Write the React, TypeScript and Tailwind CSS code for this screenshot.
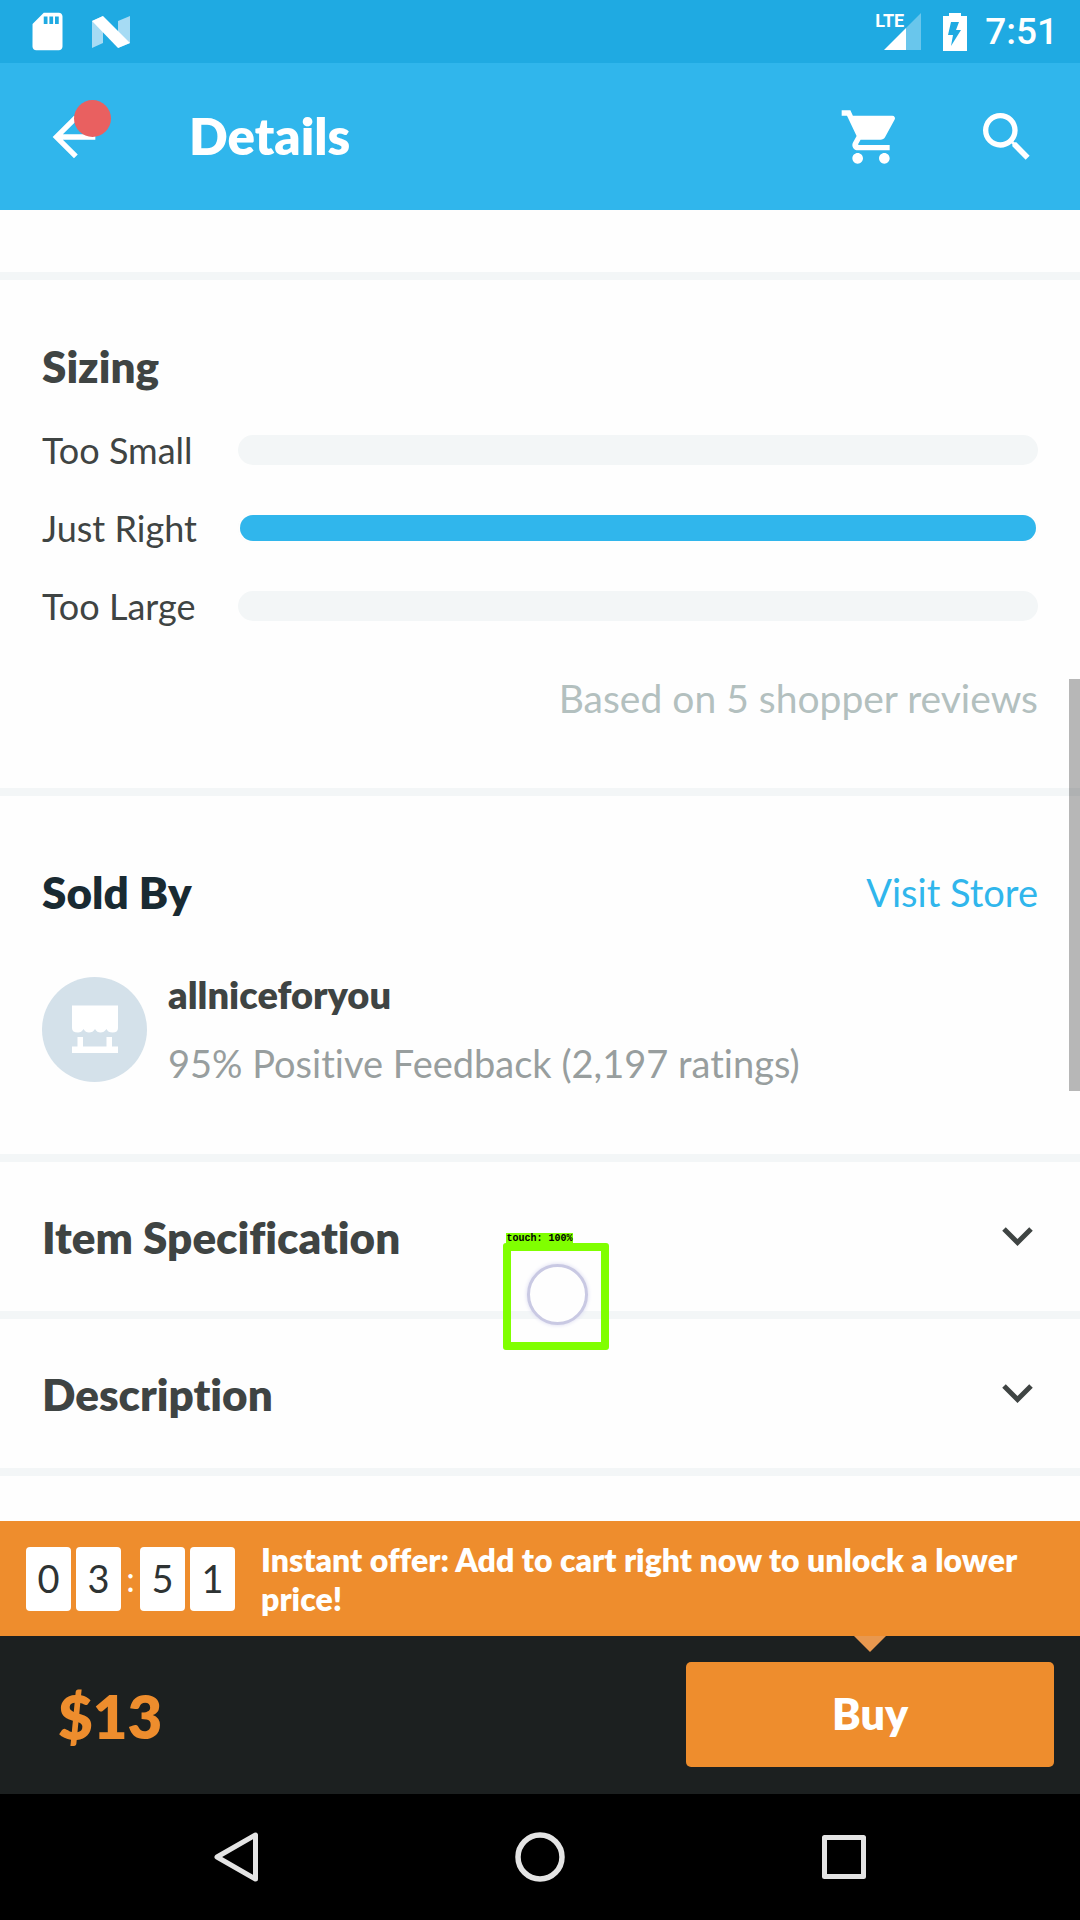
import { MdArrowBack, MdSdCard, MdSearch, MdShoppingCart } from "react-icons/md";

const sizing = [
  { label: "Too Small", percent: 0 },
  { label: "Just Right", percent: 100 },
  { label: "Too Large", percent: 0 },
];

function StatusBar() {
  return (
    <div className="flex h-[63px] items-center justify-between bg-[#1faae2] pr-[22px] pl-[25px] text-white">
      <div className="flex items-center gap-[22px]">
        <MdSdCard size={45} />
        <svg width="38" height="32" viewBox="0 0 38 32" aria-hidden="true">
          <path d="M0 5L11 0V27L0 32Z M26 5L38 0V27L26 32Z" fill="#a6dbf4" />
          <path d="M0 5L11 0L38 27L26 32Z" fill="#fff" />
        </svg>
      </div>
      <div className="flex items-center">
        <div className="relative mr-[22px] h-[37px] w-[46px]">
          <svg className="absolute right-0 bottom-0" width="37" height="37" viewBox="0 0 37 37" aria-hidden="true">
            <path d="M22 15L37 0V37H22Z" fill="#69c6ec" />
            <path d="M0 37L22 15V37Z" fill="#fff" />
          </svg>
          <span className="absolute top-0 left-0 font-['Roboto'] text-[18px] leading-4 font-bold">LTE</span>
        </div>
        <svg className="mr-[18px]" width="24" height="38" viewBox="0 0 24 38" aria-label="Battery charging">
          <path
            fill="#fff"
            fillRule="evenodd"
            d="M6 0H18V3H24V38H0V3H6Z M8 9L5 22H10L8 33L18 17H13L16 9Z"
          />
        </svg>
        <span className="font-['Roboto'] text-[37px] leading-10 font-medium">7:51</span>
      </div>
    </div>
  );
}

function AppBar() {
  return (
    <header className="flex h-[147px] items-center bg-[#30b6ec] pr-[41px] pl-[42px] text-white">
      <button aria-label="Back" className="relative">
        <MdArrowBack size={64} />
        <span className="absolute top-[-5px] left-[32px] size-[37px] rounded-full bg-[#e96060]" />
      </button>
      <h1 className="ml-[83px] flex-1 text-[51px] font-extrabold">Details</h1>
      <button aria-label="Cart" className="mr-[72px]">
        <MdShoppingCart size={64} />
      </button>
      <button aria-label="Search">
        <MdSearch size={64} />
      </button>
    </header>
  );
}

function Divider() {
  return <div className="h-2 bg-[#f3f6f7]" />;
}

function Expander({ title }: { title: string }) {
  return (
    <h2>
      <button
        aria-expanded="false"
        className="flex h-[149px] w-full items-center justify-between pr-[47px] pl-[42px] text-[44px] font-extrabold"
      >
        {title}
        <svg width="31" height="20" viewBox="0 0 31 20" fill="none" stroke="#3f4443" strokeWidth="5" aria-hidden="true">
          <path d="M2 2L15.500 15.500L29 2" />
        </svg>
      </button>
    </h2>
  );
}

function TouchMarker() {
  return (
    <div className="absolute top-[1023px] left-[503px]">
      <div className="ml-[3px] h-[10px] w-[67px] bg-[#80ff00] text-center font-['Liberation_Mono'] text-[10px] leading-[12px] font-bold whitespace-nowrap text-black">
        touch: 100%
      </div>
      <div className="flex h-[107px] w-[106px] items-start justify-center rounded-[3px] border-8 border-[#80ff00] pt-[13px] pl-[2px]">
        <div className="size-[61px] rounded-full border-[3px] border-[#c9c9e3] bg-[#fefefe] shadow-[0_0_4px_#d8d8f0]" />
      </div>
    </div>
  );
}

function Digit({ value }: { value: string }) {
  return (
    <span className="flex h-[64px] w-[45px] items-center justify-center rounded-[4px] bg-white text-[38px] text-[#2e3333]">
      {value}
    </span>
  );
}

export default function App() {
  return (
    <div className="flex min-h-screen flex-col bg-[#fefefe] font-['Lato',sans-serif] text-[#3f4443] [font-variant-ligatures:none]">
      <StatusBar />
      <AppBar />

      <main className="relative flex-1">
        <div className="h-[62px]" />
        <Divider />
        <section className="px-[42px] pt-[62px] pb-[66px]">
          <h2 className="text-[44px] leading-[48px] font-extrabold">Sizing</h2>
          <ul className="mt-[21px]">
            {sizing.map((row) => (
              <li key={row.label} className="flex h-[78px] items-center text-[36px]">
                <span className="w-[196px]">{row.label}</span>
                <span className="h-[30px] flex-1 rounded-full bg-[#f3f6f7]">
                  {row.percent > 0 && (
                    <span className="flex h-full rounded-full border-2 border-[#fefefe]">
                      <span className="rounded-full bg-[#30b6ec]" style={{ width: `${row.percent}%` }} />
                    </span>
                  )}
                </span>
              </li>
            ))}
          </ul>
          <p className="mt-[29px] text-right text-[39px] leading-[48px] text-[#b3c0bf]">Based on 5 shopper reviews</p>
        </section>
        <Divider />
        <section className="px-[42px] pt-[72px] pb-[56px]">
          <div className="flex items-center justify-between leading-[48px]">
            <h2 className="text-[44px] font-extrabold text-[#192a32]">Sold By</h2>
            <a href="#store" className="text-[38px] text-[#30b6ec]">
              Visit Store
            </a>
          </div>
          <div className="mt-[44px] flex items-center gap-[21px]">
            <svg width="105" height="105" viewBox="0 0 105 105" aria-hidden="true">
              <circle cx="52.500" cy="52.500" r="52.500" fill="#d4e1ea" />
              <path
                fill="#fff"
                d="M30 28.500H76V51Q76 55.500 70.500 55.500Q66 55.500 64.500 52Q62 55.500 58.500 55.500Q55 55.500 53 52Q51 55.500 47 55.500Q43.500 55.500 41.500 52Q39.500 55.500 36 55.500Q30 55.500 30 51Z M35.500 60H41V69.500H64.500V60H70V69.500H76V76H30V69.500H35.500Z"
              />
            </svg>
            <div className="text-[38px] leading-[69px]">
              <h3 className="font-extrabold">allniceforyou</h3>
              <p className="text-[#989e9e]">95% Positive Feedback (2,197 ratings)</p>
            </div>
          </div>
        </section>
        <Divider />
        <Expander title="Item Specification" />
        <Divider />
        <Expander title="Description" />
        <Divider />

        <div className="absolute top-[469px] right-0 h-[412px] w-[11px] bg-black/28" />
        <TouchMarker />
      </main>

      <footer>
        <div className="flex h-[115px] items-center bg-[#ee8d2d] pl-[26px] text-white">
          <div className="flex items-center gap-[5px]" role="timer">
            <Digit value="0" />
            <Digit value="3" />
            <span className="w-[9px] text-center text-[34px]">:</span>
            <Digit value="5" />
            <Digit value="1" />
          </div>
          <p className="ml-[26px] flex-1 pr-10 text-[32px] leading-[39px] font-extrabold">
            Instant offer: Add to cart right now to unlock a lower price!
          </p>
        </div>
        <div className="flex h-[158px] items-start justify-between bg-[#1c2020] pr-[26px] pl-[58px]">
          <span className="text-[60px] leading-[160px] font-extrabold text-[#ee8d2d]">$13</span>
          <div className="relative w-[368px] pt-[26px]">
            <svg className="absolute top-0 left-[168px]" width="32" height="16" viewBox="0 0 32 16" aria-hidden="true">
              <path d="M0 0H32L16 16Z" fill="#e8984f" />
            </svg>
            <button className="h-[105px] w-full rounded-[5px] bg-[#ee8d2d] text-[43px] font-extrabold text-white">
              Buy
            </button>
          </div>
        </div>
        <nav className="flex h-[126px] items-center justify-center gap-[254px] bg-black">
          <button aria-label="Back">
            <svg width="50" height="50" viewBox="0 0 50 50" fill="none" stroke="#e4e4e4" strokeWidth="5" strokeLinejoin="round">
              <path d="M44.500 3V47L6 25Z" />
            </svg>
          </button>
          <button aria-label="Home">
            <svg width="50" height="50" viewBox="0 0 50 50" fill="none" stroke="#e4e4e4" strokeWidth="5.500">
              <circle cx="25" cy="25" r="22" />
            </svg>
          </button>
          <button aria-label="Recent apps">
            <svg width="50" height="50" viewBox="0 0 50 50" fill="none" stroke="#e4e4e4" strokeWidth="5" strokeLinejoin="round">
              <path d="M5.500 5.500H44.500V44.500H5.500Z" />
            </svg>
          </button>
        </nav>
      </footer>
    </div>
  );
}
